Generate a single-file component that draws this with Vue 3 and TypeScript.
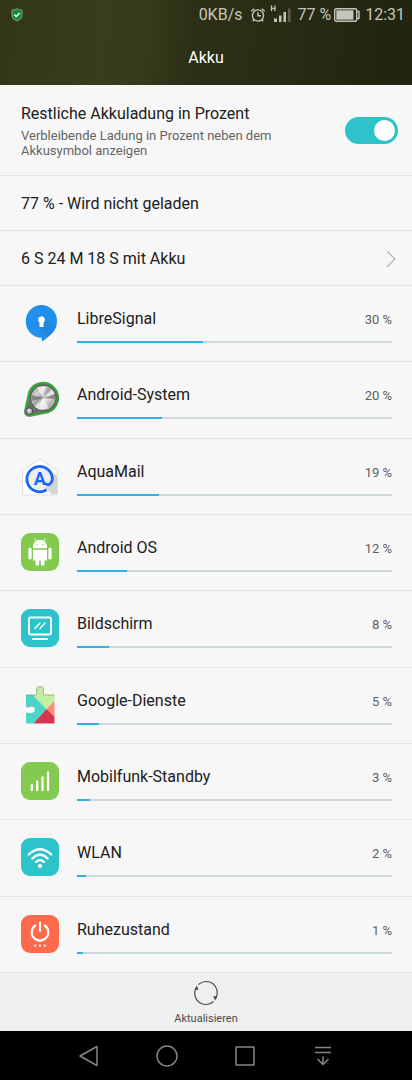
<script setup lang="ts">
import { ref } from 'vue'

interface Consumer {
  id: string
  name: string
  percent: number
  bar: number
}

const showPercent = ref(true)

const consumers: Consumer[] = [
  { id: 'signal', name: 'LibreSignal', percent: 30, bar: 40 },
  { id: 'system', name: 'Android-System', percent: 20, bar: 27 },
  { id: 'mail', name: 'AquaMail', percent: 19, bar: 26 },
  { id: 'android', name: 'Android OS', percent: 12, bar: 16 },
  { id: 'screen', name: 'Bildschirm', percent: 8, bar: 10 },
  { id: 'google', name: 'Google-Dienste', percent: 5, bar: 7 },
  { id: 'mobile', name: 'Mobilfunk-Standby', percent: 3, bar: 4 },
  { id: 'wlan', name: 'WLAN', percent: 2, bar: 3 },
  { id: 'idle', name: 'Ruhezustand', percent: 1, bar: 2 },
]
</script>

<template>
  <div class="screen">
    <header class="top">
      <div class="status">
        <svg class="shield" width="12" height="14" viewBox="0 0 12 14">
          <path d="M1 2Q4 2 6 .8Q8 2 11 2V8Q11 11 6 13Q1 11 1 8Z" fill="#128a40" stroke="#8a9a72" />
          <path d="M3.300 6.500L5.200 8.400L8.700 4.900" fill="none" stroke="#fff" stroke-width="1.400" />
        </svg>
        <span class="rate">0KB/s</span>
        <svg class="alarm" width="16" height="16" viewBox="0 0 16 16" fill="none" stroke="#c4c5bc" stroke-width="1.400">
          <circle cx="8" cy="8.500" r="5.600" />
          <path d="M8 5.200V8.800H11M1.300 4.300L4.300 1.700M14.700 4.300L11.700 1.700M4 12.800L2.700 14.300M12 12.800L13.300 14.300" />
        </svg>
        <svg class="signal" width="21" height="20" viewBox="0 0 21 20">
          <path d="M1.500 .5V6M5 .5V6M1.500 3.300H5" stroke="#c4c5bc" stroke-width="1.300" />
          <path d="M4 13.500h3V17H4zM9 10.500h2.500V17H9zM13.500 7H16V17H13.500z" fill="#c4c5bc" />
          <path d="M18 3.500h2.500V17H18z" fill="#5d5e50" />
        </svg>
        <span class="level">77 %</span>
        <svg class="battery" width="26" height="14" viewBox="0 0 26 14">
          <rect x=".7" y=".7" width="22" height="12.600" rx="1.500" fill="none" stroke="#c4c5bc" stroke-width="1.400" />
          <path d="M2.300 2.300h17.200v9.400H2.300z" fill="#c4c5bc" />
          <path d="M23 3.500h2v7h-2" fill="none" stroke="#c4c5bc" stroke-width="1.400" />
        </svg>
        <span>12:31</span>
      </div>
      <h1>Akku</h1>
    </header>

    <main>
      <label class="setting" for="percent-switch">
        <span class="copy">
          <span class="heading">Restliche Akkuladung in Prozent</span>
          <span class="note">Verbleibende Ladung in Prozent neben dem Akkusymbol anzeigen</span>
        </span>
        <input id="percent-switch" v-model="showPercent" class="switch" type="checkbox" role="switch" />
      </label>
      <div class="line">77 % - Wird nicht geladen</div>
      <button class="line" type="button">
        <span>6 S 24 M 18 S mit Akku</span>
        <svg width="10" height="18" viewBox="0 0 10 18" fill="none" stroke="#b0b0b0" stroke-width="1.100">
          <path d="M1 1L9 9L1 17" />
        </svg>
      </button>

      <ul class="list">
        <li v-for="item in consumers" :key="item.id">
          <svg class="icon" width="38" height="39" viewBox="0 0 38 39">
            <template v-if="item.id === 'signal'">
              <path d="M20.500 1A15.700 15.700 0 0 1 36 17C36 26 30 31.500 21.200 37.500L20.700 33.800A16 16 0 0 1 4.800 17A15.700 15.700 0 0 1 20.500 1Z" fill="#2090ea" />
              <path d="M23 14L35 23Q32 29 25 33L18.500 23L22 23Z" fill="#1d88df" />
              <path d="M20.500 12.300a3.600 3.600 0 0 1 2 6.500V23h-4v-4.200a3.600 3.600 0 0 1 2-6.500Z" fill="#fff" />
            </template>
            <template v-else-if="item.id === 'system'">
              <defs>
                <linearGradient id="steel" x1="0" y1="0" x2="1" y2="1">
                  <stop offset="0" stop-color="#8a8a8a" />
                  <stop offset=".3" stop-color="#d4d4d4" />
                  <stop offset=".45" stop-color="#a0a0a0" />
                  <stop offset=".55" stop-color="#eee" />
                  <stop offset=".75" stop-color="#b5b5b5" />
                  <stop offset="1" stop-color="#808080" />
                </linearGradient>
              </defs>
              <path d="M8.300 12A14.900 14.900 0 1 1 27 32L8.500 35.700Q3.700 35.500 4.200 31Z" fill="#777" stroke="#8b8b8b" stroke-width="2.400" />
              <path d="M8.700 12A14.800 14.800 0 1 1 27 32L8.500 35.300Q4.300 35.300 4.500 31Z" fill="#6d6d6d" stroke="#1fb41f" stroke-width="1.600" />
              <circle cx="22.300" cy="18" r="12.800" fill="url(#steel)" stroke="#505050" />
              <path d="M22.300 18L10.500 15V21ZM22.300 18L34 14V19Z" fill="#4c4c4c" opacity=".55" />
              <path d="M22.300 18L16 7.500L25 6.500ZM22.300 18L18 29.500L28 28.500Z" fill="#fff" opacity=".6" />
              <circle cx="8.300" cy="31.200" r="3.500" fill="#aaa" stroke="#444" />
              <circle cx="8" cy="30.500" r="1.300" fill="#eee" />
            </template>
            <template v-else-if="item.id === 'mail'">
              <path d="M1.500 13.500L19 2L36.500 13.500V36Q36.500 38 34.500 38H3.500Q1.500 38 1.500 36Z" fill="#fff" stroke="#dedede" />
              <path d="M29 13L36 19V37L31 37.500L25 31.500L12 31Z" fill="#d4d4d6" />
              <circle cx="19" cy="21" r="11" fill="#ededee" />
              <path d="M23.800 26.300C27 29 30.500 27 31.300 23A12.700 12.700 0 1 0 25.500 32.800" fill="none" stroke="#1667f5" stroke-width="2.800" />
              <text x="18.700" y="27.500" class="letter" text-anchor="middle">A</text>
            </template>
            <template v-else-if="item.id === 'android'">
              <rect width="38" height="38" rx="9" fill="#85ca50" />
              <path d="M12 13.700A7 7 0 0 1 26 13.700V15.300H12ZM12 16.700H26V26Q26 27.500 24.500 27.500H23.500V31.500A1.900 1.900 0 0 1 19.900 31.500V27.500H18.100V31.500A1.900 1.900 0 0 1 14.500 31.500V27.500H13.500Q12 27.500 12 26Z" fill="#fff" />
              <path d="M9 16V25M29 16V25" stroke="#fff" stroke-width="3.200" stroke-linecap="round" />
              <path d="M15 8L13.700 5.800M23 8L24.300 5.800" stroke="#fff" stroke-linecap="round" />
              <circle cx="16" cy="11.500" r=".8" fill="#85ca50" />
              <circle cx="22" cy="11.500" r=".8" fill="#85ca50" />
            </template>
            <g v-else-if="item.id === 'screen'" fill="none" stroke="#fff" stroke-linecap="round">
              <rect width="38" height="38" rx="9" fill="#2dc3ca" stroke="none" />
              <rect x="8" y="8.500" width="22" height="17" rx="1.500" stroke-width="1.900" />
              <path d="M14 19.500L19 14M19 19.500L24 14" stroke-width="1.300" />
              <path d="M12 30H26" stroke-width="2" />
            </g>
            <template v-else-if="item.id === 'google'">
              <path d="M5 9H14.500C16.500 9 16 6.500 15.500 4C15.500 1 17 .7 19 .7S22.700 1 22.700 4C22 6.500 22 9 24 9H33.500V15L25.500 23L14.500 12Z" fill="#c3efa0" />
              <path d="M5 9H11.500L25.500 23L12.500 37.500H6Q5 37.500 5 36.500V27C8 26 10 28 12 26.500C14.500 25.500 14.500 21.500 12 20.500C10 19 8 22 5 20.500Z" fill="#4bd5c6" />
              <path d="M33.500 15V32L25.500 23Z" fill="#ff8d78" />
              <path d="M25.500 23L33.500 31V37.500H12.500Z" fill="#d2364f" />
              <path d="M5 9H14.500C16.500 9 16 6.500 15.500 4C15.500 1 17 .7 19 .7S22.700 1 22.700 4C22 6.500 22 9 24 9H33.500M5 20.500C8 22 10 19 12 20.500" fill="none" stroke="#8b9e88" stroke-width=".8" />
            </template>
            <g v-else-if="item.id === 'mobile'" stroke="#fff" stroke-width="2.300" stroke-linecap="round">
              <rect width="38" height="38" rx="9" fill="#85ca50" stroke="none" />
              <path d="M10.800 23V28M16.200 19.500V28M21.500 15.500V28M27 10.500V28" />
            </g>
            <g v-else-if="item.id === 'wlan'" fill="none" stroke="#fff" stroke-width="2.200" stroke-linecap="round">
              <rect width="38" height="38" rx="9" fill="#2dc3ca" stroke="none" />
              <path d="M7.700 16.500Q19 6 30.300 16.500M11.300 20.500Q19 13 26.700 20.500M15 24Q19 20.500 23 24" />
              <circle cx="19" cy="28" r="2.100" fill="#fff" stroke="none" />
            </g>
            <g v-else fill="none" stroke="#fff" stroke-width="2.200" stroke-linecap="round">
              <rect width="38" height="38" rx="9" fill="#ff6a4d" stroke="none" />
              <path d="M14.200 10.500A8.300 8.300 0 1 0 23.800 10.500M19 7.500V16" />
              <path d="M14.300 30.700h.01M19 30.700h.01M23.700 30.700h.01" />
            </g>
          </svg>
          <div class="usage">
            <div class="caption">
              <span class="name">{{ item.name }}</span>
              <span class="share">{{ item.percent }} %</span>
            </div>
            <div class="track"><div class="fill" :style="{ width: item.bar + '%' }"></div></div>
          </div>
        </li>
      </ul>
    </main>

    <footer>
      <button class="refresh" type="button">
        <svg width="26" height="26" viewBox="0 0 26 26">
          <path d="M5.500 4.500A11.200 11.200 0 0 1 23 18M20.500 21.500A11.200 11.200 0 0 1 3 8" fill="none" stroke="#4b4b4b" stroke-width="1.200" />
          <path d="M1.500 9.500L4 5.500L5.500 10ZM24.500 16.500L22 20.500L20.300 16Z" fill="#4b4b4b" />
        </svg>
        <span>Aktualisieren</span>
      </button>
    </footer>

    <nav>
      <button type="button" aria-label="Zurück">
        <svg width="24" height="24" viewBox="0 0 24 24"><path d="M20 2.500V21.500L3 12Z" /></svg>
      </button>
      <button type="button" aria-label="Startbildschirm">
        <svg width="24" height="24" viewBox="0 0 24 24"><circle cx="12" cy="12" r="10" /></svg>
      </button>
      <button type="button" aria-label="Letzte Apps">
        <svg width="24" height="24" viewBox="0 0 24 24"><rect x="3" y="3" width="18" height="18" /></svg>
      </button>
      <button type="button" aria-label="Benachrichtigungen">
        <svg width="24" height="24" viewBox="0 0 24 24"><path d="M4 3.500H20M4 8.500H20M12 12.500V20.500M6.500 15L12 20.500L17.500 15" /></svg>
      </button>
    </nav>
  </div>
</template>

<style>
body {
  margin: 0;
}
</style>

<style scoped>
.screen {
  min-height: 100vh;
  display: flex;
  flex-direction: column;
  background: #f7f7f7;
  color: #202020;
  font-family: Roboto, "Noto Sans", sans-serif;
  font-size: 16px;
  line-height: 20px;
}
button {
  border: 0;
  padding: 0;
  background: none;
  color: inherit;
  font: inherit;
  cursor: pointer;
}
svg {
  flex: none;
  display: block;
}
.top {
  height: 85px;
  background: linear-gradient(95deg, #333718 0%, #383d1c 25%, #363b1b 36%, #2d3015 46%, #292b14 70%, #222310 100%);
  color: #fff;
}
.status {
  display: flex;
  align-items: center;
  height: 30px;
  padding: 0 7px 0 11px;
  color: #c4c5bc;
}
.rate {
  margin-left: auto;
}
.alarm {
  margin-left: 8px;
}
.signal {
  margin-left: 4px;
}
.level {
  margin-left: 6px;
}
.battery {
  margin: 0 5px 0 3px;
}
h1 {
  margin: 0;
  padding-top: 18px;
  font-size: 16px;
  font-weight: 400;
  line-height: 20px;
  text-align: center;
}
main {
  flex: 1;
  display: flex;
  flex-direction: column;
}
.setting,
.line {
  box-sizing: border-box;
  display: flex;
  align-items: center;
  justify-content: space-between;
  border-bottom: 1px solid #e4e4e4;
  padding: 0 14px 0 21px;
  text-align: left;
}
.setting {
  min-height: 91px;
}
.copy {
  max-width: 260px;
  padding-top: 2px;
}
.heading,
.note {
  display: block;
}
.note {
  margin-top: 4px;
  color: #646464;
  font-size: 13px;
  line-height: 15px;
}
.line {
  height: 55px;
  padding-top: 2px;
  padding-right: 16px;
}
.switch {
  appearance: none;
  flex: none;
  box-sizing: border-box;
  display: flex;
  width: 53px;
  height: 27px;
  margin: 0;
  border-radius: 14px;
  padding: 3px;
  background: #b9bec0;
}
.switch::before {
  content: "";
  width: 21px;
  height: 21px;
  border-radius: 50%;
  background: #fff;
}
.switch:checked {
  justify-content: flex-end;
  background: #2dc3ca;
}
.list {
  flex: 1;
  display: flex;
  flex-direction: column;
  margin: 0;
  padding: 0;
  list-style: none;
}
li {
  flex: 1;
  box-sizing: border-box;
  display: flex;
  min-height: 76px;
  border-bottom: 1px solid #e4e4e4;
  padding: 18px 20px 0 21px;
}
.usage {
  flex: 1;
  margin-left: 18px;
  padding-top: 5px;
}
.caption {
  display: flex;
  align-items: baseline;
  justify-content: space-between;
}
.share {
  color: #5f5f5f;
  font-size: 13px;
}
.track {
  height: 2px;
  margin-top: 11px;
  background: #ccd6db;
}
.fill {
  height: 2px;
  background: #2fb3e6;
}
.letter {
  fill: #1667f5;
  font-size: 18px;
  font-weight: 700;
}
footer {
  background: #efefef;
}
.refresh {
  display: flex;
  flex-direction: column;
  align-items: center;
  width: 100%;
  height: 58px;
  padding-top: 7px;
  color: #4b4b4b;
  font-size: 11px;
  line-height: 14px;
}
.refresh span {
  margin-top: 6px;
}
nav {
  display: flex;
  justify-content: space-between;
  height: 49px;
  padding: 0 50px;
  background: #000;
}
nav button {
  display: flex;
  align-items: center;
  justify-content: center;
  width: 78px;
}
nav svg {
  fill: none;
  stroke: #858585;
  stroke-width: 1.5px;
  stroke-linejoin: round;
}
</style>
